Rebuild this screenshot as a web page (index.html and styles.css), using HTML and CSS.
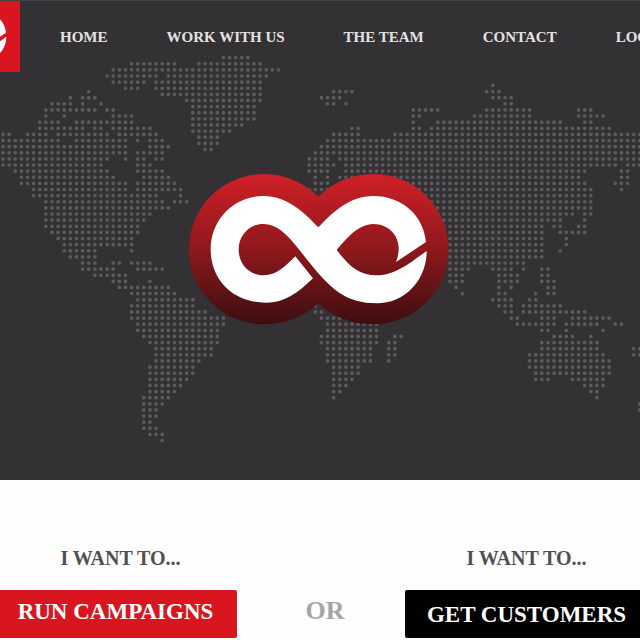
FILE: index.html
```html
<!DOCTYPE html>
<html lang="en">
<head>
<meta charset="utf-8">
<title>Home</title>
<link rel="stylesheet" href="styles.css">
</head>
<body>
<section class="hero">
  <svg class="map" viewBox="0 0 640 480" preserveAspectRatio="xMidYMid slice" aria-hidden="true">
    <g transform="translate(3 57.6) scale(6.123)"><path id="map-arctic" class="dots"/></g>
    <g transform="translate(3 85.4) scale(6.123)"><path id="map-world" class="dots"/></g>
  </svg>
  <header class="header">
    <a class="brand" href="#" aria-label="Home page">
      <svg class="brand-mark" viewBox="698 12 134 483" aria-hidden="true"><use href="#loop"/></svg>
    </a>
    <nav class="nav">
      <a href="#">HOME</a>
      <a href="#">WORK WITH US</a>
      <a href="#">THE TEAM</a>
      <a href="#">CONTACT</a>
      <a href="#">LOGIN</a>
    </nav>
  </header>
  <svg class="logo" viewBox="0 0 840 510" role="img" aria-label="Infinity logo">
    <defs>
      <linearGradient id="shade" x1="0" y1="0" x2="0" y2="1">
        <stop offset="0" stop-color="#d02027"/>
        <stop offset=".5" stop-color="#8e181c"/>
        <stop offset="1" stop-color="#3c0e11"/>
      </linearGradient>
      <path id="loop" fill="#fff" d="M415 187C370 140 320 93 250 93C160 93 92 165 92 253C92 345 160 413 258 413C315 413 352 385 399 340L346 274C315 305 290 331 250 331C208 331 176 297 176 254C176 212 208 177 250 177C290 177 320 208 346 240C395 300 430 350 480 385C510 405 545 415 590 415C675 415 740 345 740 258C700 285 650 331 590 331C535 331 505 300 470 255C500 220 535 177 580 177C625 177 656 210 656 250C656 268 652 280 648 291L738 231C730 150 665 93 580 93C510 93 460 140 415 187Z"/>
    </defs>
    <path fill="url(#shade)" d="M415 95C370 52 315 27 252 27A225.500 225.500 0 0 0 252 478C315 478 370 455 415 416C460 455 515 478 580 478A225.500 225.500 0 0 0 580 27C515 27 460 52 415 95Z"/>
    <use href="#loop"/>
  </svg>
</section>
<main class="choices">
  <section class="choice choice-run">
    <h2 class="lead">I WANT TO...</h2>
    <a class="button button-red" href="#">RUN CAMPAIGNS</a>
  </section>
  <p class="or">OR</p>
  <section class="choice">
    <h2 class="lead">I WANT TO...</h2>
    <a class="button button-black" href="#">GET CUSTOMERS</a>
  </section>
</main>
<script src="map.js"></script>
</body>
</html>
```
FILE: styles.css
```css
* { box-sizing: border-box; }

body {
  margin: 0;
  overflow-x: hidden;
  background: #fefefe;
  font-family: "Liberation Serif", "Times New Roman", serif;
  font-weight: bold;
}

a { text-decoration: none; }

.hero {
  position: relative;
  overflow: hidden;
  padding-bottom: 145px;
  background: #333133;
  border-top: 1px solid #454346;
}

.map {
  position: absolute;
  inset: -1px 0 0;
  width: 100%;
  height: calc(100% + 1px);
}

.dots {
  fill: none;
  stroke: #5d5b5e;
  stroke-width: .6;
  stroke-linecap: round;
  stroke-dasharray: 0 1;
}

.header {
  position: relative;
  display: flex;
  align-items: center;
  gap: 40px;
  height: 72px;
  margin-top: -1px;
}

.brand {
  flex: none;
  width: 20px;
  height: 72px;
  background: #d9161f;
}

.brand-mark {
  display: block;
  width: 20px;
  height: 72px;
}

.nav {
  display: flex;
  gap: 59px;
  padding-top: 1px;
}

.nav a {
  flex: none;
  color: #e4e3e4;
  font-size: 15px;
  line-height: 20px;
  white-space: nowrap;
}

.logo {
  position: relative;
  display: block;
  width: 280px;
  margin: 93px auto 0;
}

.choices {
  display: flex;
  justify-content: center;
  padding: 66px 0 0 2px;
}

.choice {
  flex: none;
  width: 243px;
  text-align: center;
}

.lead {
  margin: 0 0 20px;
  color: #505052;
  font-size: 20px;
  line-height: 24px;
}

.choice-run .lead { padding-left: 10px; }

.button {
  display: block;
  height: 48px;
  border-radius: 2px;
  color: #fff;
  font-size: 23px;
  line-height: 28px;
}

.button-red {
  padding-top: 8px;
  background: #d9161f;
}

.button-black {
  padding-top: 11px;
  background: #000;
}

.or {
  flex: none;
  width: 168px;
  margin: 50px 0 0;
  padding-left: 8px;
  color: #a5a5a5;
  font-size: 26px;
  line-height: 30px;
  text-align: center;
}
```
FILE: map.js
```js
// Each row lists the columns that hold a dot, as "from-to" runs or single columns.
const arctic = [
  "36-40", "21-28 32-42", "18-45", "17-25 27-43", "18-23 25-42", "20-22 25-42",
  "26-42", "30-42", "31-41", "31-41", "31-41", "31-39", "31-37", "32-35", "32-35", "33-34"
];

const world = [
  "80",
  "14 54-57 79-81",
  "11 13-15 52-55 80-83",
  "8-11 13 16 53-54 56 82-83",
  "7-15 17-18 67-71 79-86 94-96",
  "7 10 18-21 67-68 77-86 94-98",
  "6-9 12-21 67 71-91 95-96",
  "6-13 15-16 18-24 57-58 67-68 70-99",
  "0-1 4-7 9-17 19-25 54-58 64-104",
  "0-9 12-20 22 24-26 53-104",
  "0-20 24-27 52-104",
  "0-20 22-26 51-104",
  "0-17 20 22-23 25-26 50-53 55-104",
  "0-16 22-24 50-54 56-100 102-104",
  "2-17 22-26 50-53 56-95 101-102",
  "3-18 23-27 51 53 55-94 101-102",
  "3-20 22-28 51-53 56-95 100-102",
  "5-20 22-29 50-53 60-96 101",
  "5-25 29 68-96",
  "7-26 28-30 68-96",
  "7-27 68-96",
  "7-24 68-93 95-96",
  "7-23 70-91 95",
  "7-22 70-88 90-91 94-95",
  "8-22 70-88 91-95",
  "9-21 70-88 92",
  "10-21 70-88 92",
  "10-15 21 70-88 91",
  "11-15 70-88",
  "13-15 18-19 21-24 73-85",
  "13-18 22-26 73-76 80-83 85 88-89",
  "15-20 73-75 81-84 88-89",
  "18-20 24 73-75 81-84 88-90",
  "19-27 74 81 83 89-90",
  "21-28 75 81-82 87 89-90",
  "22-31 80-83 86-87",
  "21-31 51 81-83 85-91",
  "21-33 51-52 82-83 85-95",
  "21-36 52-60 83-84 88-90 93-99",
  "22-36 53-61 84-90 92-97 100-101",
  "22-35 53-61 88-89 92 98",
  "23-35 52-61 64-65 90-93 96",
  "24-35 52-61 63-64 88-97",
  "25-34 53-60 63-64 88-97 103-104",
  "25-34 53-60 63-64 86-98 103-104",
  "25-32 53-60 63 86-99",
  "24-31 54-58 86-99",
  "24-31 54-58 87-99",
  "24-30 54-57 87-89 93-98",
  "24-29 54-56 95-98",
  "24-28 54-55 96-97",
  "23-27 54 97",
  "23-26 104",
  "23-25 104",
  "23-25",
  "23-24",
  "23-25",
  "24-26",
  "26"
];

function toPath(rows) {
  return rows.map((row, y) => row.split(" ").map(run => {
    const [from, to = from] = run.split("-").map(Number);
    return `M${from} ${y}h${to - from + 0.01}`;
  }).join("")).join("");
}

document.getElementById("map-arctic").setAttribute("d", toPath(arctic));
document.getElementById("map-world").setAttribute("d", toPath(world));
```
